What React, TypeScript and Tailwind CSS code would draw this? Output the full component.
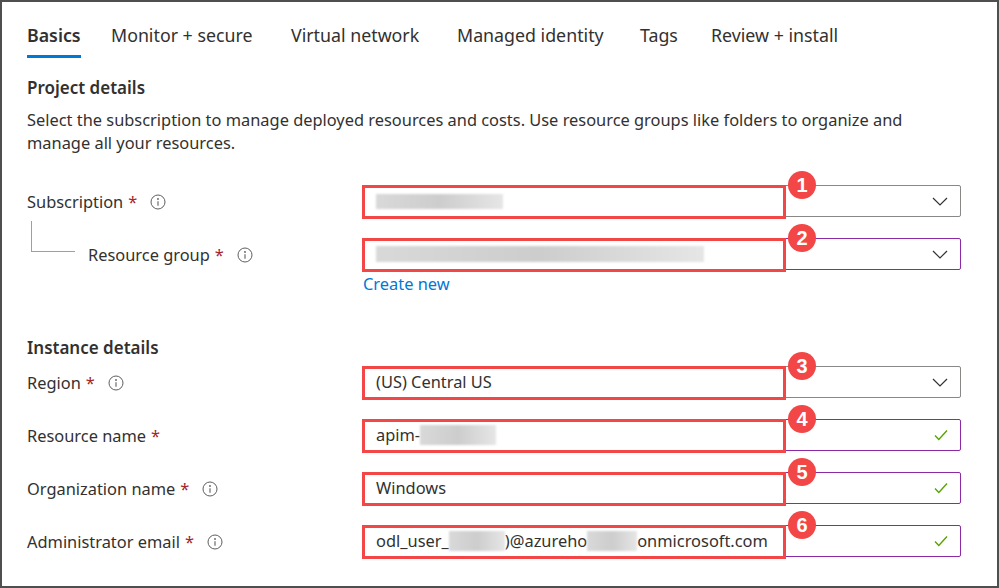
import React from "react";

function Info() {
  return (
    <svg width="16" height="16" viewBox="0 0 16 16" className="shrink-0">
      <circle cx="8" cy="8" r="7" fill="none" stroke="#605e5c" strokeWidth="1" />
      <circle cx="8" cy="5" r="0.9" fill="#605e5c" />
      <path d="M8 7.2v4.6" stroke="#605e5c" strokeWidth="1.1" />
    </svg>
  );
}

function Chevron() {
  return (
    <svg width="16" height="9" viewBox="0 0 16 9" className="shrink-0">
      <path d="M1 1l7 7 7-7" fill="none" stroke="#323130" strokeWidth="1.2" />
    </svg>
  );
}

function Check() {
  return (
    <svg width="14" height="12" viewBox="0 0 14 12" className="shrink-0">
      <path d="M1 6.5l3.8 4L13 1.5" fill="none" stroke="#57a300" strokeWidth="1.4" />
    </svg>
  );
}

function Blur({ w, h = 15 }: { w: number; h?: number }) {
  return (
    <span
      className="inline-block align-middle bg-gradient-to-r from-[#d9d9d9] via-[#cdcdcd] to-[#e6e6e6] blur-[1px]"
      style={{ width: w, height: h }}
    />
  );
}

function Label({
  text,
  info = true,
  star = true,
}: {
  text: string;
  info?: boolean;
  star?: boolean;
}) {
  return (
    <div className="flex items-center text-[16.4px] leading-[22px] text-[#323130]">
      <span>{text}</span>
      {star && <span className="ml-[5px] text-[#a4262c]">*</span>}
      {info && (
        <span className="ml-[13px] flex items-center">
          <Info />
        </span>
      )}
    </div>
  );
}

function Field({
  n,
  purple = false,
  kind,
  children,
}: {
  n: number;
  purple?: boolean;
  kind: "select" | "check";
  children?: React.ReactNode;
}) {
  return (
    <div
      className={`relative flex h-[32px] w-[598px] items-center rounded-[2px] border bg-white pl-[12px] pr-[12px] ${
        purple ? "border-[#8c2aa6]" : "border-[#8a8886]"
      }`}
    >
      <div className="flex flex-1 items-center text-[16.4px] text-[#323130]">{children}</div>
      {kind === "select" ? <Chevron /> : <Check />}
      <div className="pointer-events-none absolute left-[-2px] top-[-1px] h-[34px] w-[424px] border-[3px] border-[#f34646]" />
      <div className="absolute left-[424px] top-[-15px] flex h-[28px] w-[28px] items-center justify-center rounded-full bg-[#f34646] font-['Liberation_Sans',sans-serif] text-[20px] font-bold leading-none text-white">
        {n}
      </div>
    </div>
  );
}

function Row({
  label,
  children,
  className = "",
}: {
  label: React.ReactNode;
  children: React.ReactNode;
  className?: string;
}) {
  return (
    <div className={`flex h-[32px] items-center ${className}`}>
      <div className="w-[336px] pt-[2px]">{label}</div>
      {children}
    </div>
  );
}

export default function App() {
  const tabs = [
    { t: "Basics", w: 84 },
    { t: "Monitor + secure", w: 180 },
    { t: "Virtual network", w: 166 },
    { t: "Managed identity", w: 183 },
    { t: "Tags", w: 71 },
    { t: "Review + install", w: 160 },
  ];
  return (
    <div className="h-[588px] w-[999px] overflow-hidden border-2 border-[#4f4f4f] bg-white pl-[25px] font-['Noto_Sans',sans-serif] text-[#323130]">
      <div className="flex">
        {tabs.map((tab, i) => (
          <div key={tab.t} className="shrink-0 pt-[21px]" style={{ width: tab.w }}>
            <span
              className={`inline-block h-[35px] pb-[8px] text-[17.8px] leading-[24px] ${
                i === 0 ? "border-b-[3px] border-[#0078d4] font-semibold" : "border-b-[3px] border-transparent"
              }`}
            >
              {tab.t}
            </span>
          </div>
        ))}
      </div>

      <div className="mt-[18px] text-[17px] font-semibold leading-[24px]">Project details</div>
      <p className="mt-[8px] w-[900px] text-[16.4px] leading-[23px]">
        Select the subscription to manage deployed resources and costs. Use resource groups like folders to organize and
        manage all your resources.
      </p>

      <Row className="mt-[31px]" label={<Label text="Subscription" />}>
        <Field n={1} kind="select">
          <Blur w={127} />
        </Field>
      </Row>

      <Row
        className="relative mt-[21px]"
        label={
          <div className="pl-[61px]">
            <Label text="Resource group" />
          </div>
        }
      >
        <div className="absolute left-[4px] top-[-17px] h-[31px] w-[44px] border-b border-l border-[#a19f9d]" />
        <Field n={2} purple kind="select">
          <Blur w={328} h={16} />
        </Field>
      </Row>

      <div className="ml-[336px] mt-[3px] text-[16.4px] leading-[22px] text-[#0078d4]">Create new</div>

      <div className="mt-[41px] text-[17px] font-semibold leading-[24px]">Instance details</div>

      <Row className="mt-[6px]" label={<Label text="Region" />}>
        <Field n={3} kind="select">
          (US) Central US
        </Field>
      </Row>

      <Row className="mt-[21px]" label={<Label text="Resource name" info={false} />}>
        <Field n={4} purple kind="check">
          <span>apim-</span>
          <Blur w={76} h={20} />
        </Field>
      </Row>

      <Row className="mt-[21px]" label={<Label text="Organization name" />}>
        <Field n={5} purple kind="check">
          Windows
        </Field>
      </Row>

      <Row className="mt-[21px]" label={<Label text="Administrator email" />}>
        <Field n={6} purple kind="check">
          <span>odl_user_</span>
          <Blur w={56} h={20} />
          <span>)@azureho</span>
          <Blur w={50} h={20} />
          <span>onmicrosoft.com</span>
        </Field>
      </Row>
    </div>
  );
}
